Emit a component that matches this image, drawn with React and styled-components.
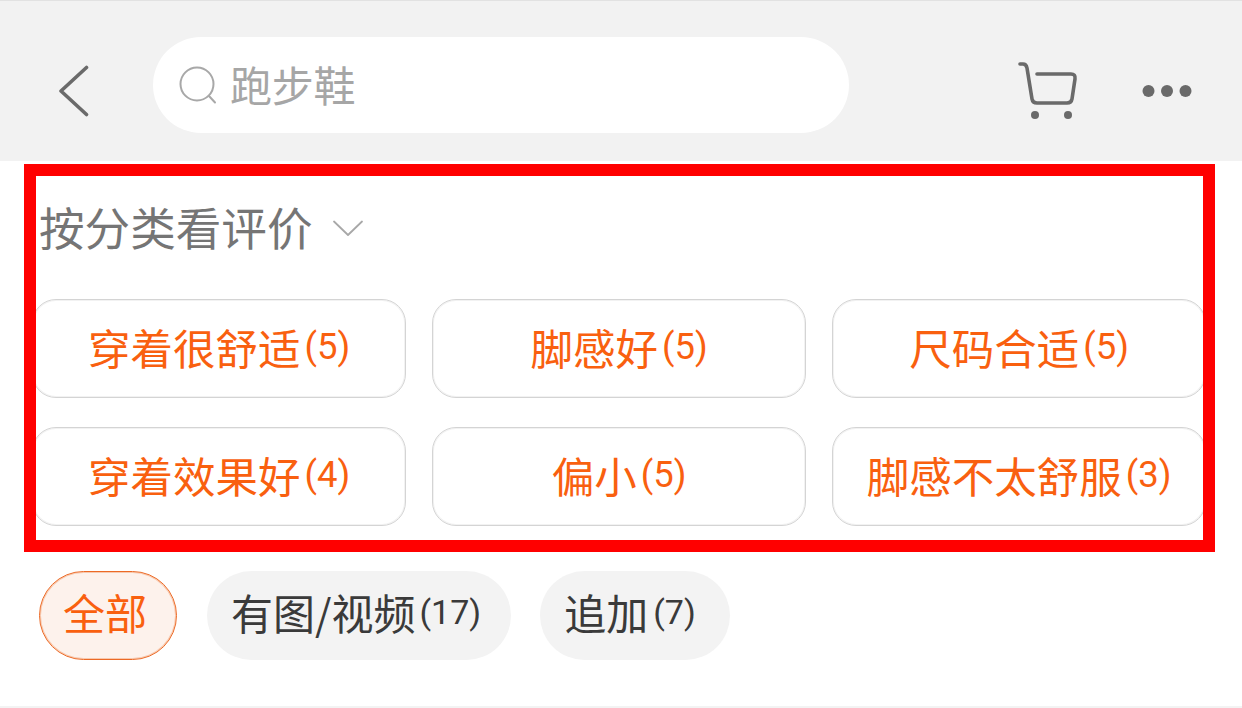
import React from "react";
import styled, { createGlobalStyle } from "styled-components";

const Global = createGlobalStyle`
  html, body { margin: 0; padding: 0; background: #fff; }
  body { font-family: "Liberation Sans", "Noto Sans CJK SC", sans-serif; }
  #root { width: 1242px; height: 708px; overflow: hidden; }
`;
const Page = styled.div`
  position: relative;
  width: 1242px;
  height: 708px;
  display: flex;
  flex-direction: column;
  overflow: hidden;
  background: #fff;
  border-bottom: 2px solid #f3f3f3;
  box-sizing: border-box;
`;
const Header = styled.header`
  height: 161px;
  flex: none;
  box-sizing: border-box;
  border-top: 1px solid #e2e2e2;
  background: #f2f2f2;
  display: flex;
  align-items: center;
  padding: 8px 50px 0 58px;
`;
const BackButton = styled.div`
  width: 95px;
  flex: none;
  display: flex;
  align-items: center;
  height: 60px;
  padding-top: 12px;
  box-sizing: border-box;
`;
const SearchBox = styled.div`
  width: 696px;
  height: 96px;
  flex: none;
  border-radius: 48px;
  background: #fff;
  display: flex;
  align-items: center;
  padding-left: 26px;
  box-sizing: border-box;
  gap: 13px;
`;
const SearchText = styled.span`
  font: 400 42px/1 "Noto Sans CJK SC", sans-serif;
  color: #a6a6a6;
  letter-spacing: -0.2px;
  margin-bottom: 3px;
`;
const HeaderActions = styled.div`
  margin-left: auto;
  display: flex;
  align-items: center;
  gap: 64px;
  padding-top: 12px;
`;
const Content = styled.main`
  flex: 1;
  display: flex;
  flex-direction: column;
  padding: 0 0 0 32px;
`;
const TitleRow = styled.div`
  height: 132px;
  display: flex;
  align-items: center;
  padding: 0 0 0 7px;
  gap: 20px;
  margin-bottom: 6px;
`;
const Title = styled.h2`
  margin: 0;
  font: 400 45.6px/1 "Noto Sans CJK SC", sans-serif;
  color: #757575;
`;
const ChevronWrap = styled.span`
  display: flex;
  padding-top: 2px;
`;
const TagGrid = styled.div`
  display: grid;
  grid-template-columns: repeat(3, 374px);
  grid-auto-rows: 99px;
  column-gap: 26px;
  row-gap: 29px;
`;
const Tag = styled.div`
  box-sizing: border-box;
  border: 1px solid #d4d4d4;
  box-shadow: inset 0 0 0 1px #f2f2f2;
  border-radius: 24px;
  display: flex;
  align-items: center;
  justify-content: center;
  color: #f9600f;
  background: #fff;
  font: 400 42.5px/1 "Noto Sans CJK SC", sans-serif;
  white-space: nowrap;
  padding-bottom: 3px;
`;
const Count = styled.span`
  font-family: Roboto, "Liberation Sans", sans-serif;
  font-size: ${(p) => p.$size || 36.5}px;
  margin-left: ${(p) => p.$gap || 4}px;
`;
const FilterRow = styled.div`
  display: flex;
  gap: 29px;
  margin: 45px 0 0 7px;
`;
const Filter = styled.div`
  box-sizing: border-box;
  height: 89px;
  padding: 0 ${(p) => p.$right || 30}px 8px ${(p) => (p.$active ? 23 : 24)}px;
  margin-right: ${(p) => (p.$active ? 1 : 0)}px;
  border-radius: 45px;
  display: flex;
  align-items: center;
  white-space: nowrap;
  font: 400 42px/1 "Noto Sans CJK SC", sans-serif;
  color: ${(p) => (p.$active ? "#f9600f" : "#3a3a3a")};
  background: ${(p) => (p.$active ? "#fdf2ec" : "#f3f3f3")};
  border: ${(p) => (p.$active ? "1px solid #ec6a26" : "none")};
  box-shadow: ${(p) => (p.$active ? "inset 0 0 0 1px #f8c9ae" : "none")};
`;
const HighlightFrame = styled.div`
  position: absolute;
  left: 24px;
  top: 164px;
  width: 1191px;
  height: 388px;
  box-sizing: border-box;
  border: 12px solid #ff0000;
  pointer-events: none;
`;

const tags = [
  ["穿着很舒适", "(5)"],
  ["脚感好", "(5)"],
  ["尺码合适", "(5)"],
  ["穿着效果好", "(4)"],
  ["偏小", "(5)"],
  ["脚感不太舒服", "(3)"],
];

export default function App() {
  return (
    <Page>
      <Global />
      <Header>
        <BackButton>
          <svg width="32" height="52" viewBox="0 0 32 52" fill="none">
            <path d="M28.500 2.500 3 26l25.500 23.500" stroke="#6a6a6a" strokeWidth="3.600" strokeLinecap="round" strokeLinejoin="round" />
          </svg>
        </BackButton>
        <SearchBox>
          <svg width="38" height="38" viewBox="0 0 38 38" fill="none">
            <circle cx="18" cy="18" r="16.500" stroke="#a8a8a8" strokeWidth="2" />
            <path d="m30 30 6 6.500" stroke="#a8a8a8" strokeWidth="2" strokeLinecap="round" />
          </svg>
          <SearchText>跑步鞋</SearchText>
        </SearchBox>
        <HeaderActions>
          <svg width="60" height="58" viewBox="0 0 60 58" fill="none">
            <path d="M2 2h3c2 0 3.500 1.500 4 4l5 31c.5 3 2 4 5 4h30c3 0 4.500-1 5-4l3-20c.5-3.500-1-5-4-5H19" stroke="#6a6a6a" strokeWidth="3.600" strokeLinecap="round" strokeLinejoin="round" />
            <circle cx="17" cy="53" r="4" fill="#6a6a6a" />
            <circle cx="50" cy="53" r="4" fill="#6a6a6a" />
          </svg>
          <svg width="50" height="14" viewBox="0 0 50 14" fill="#6a6a6a">
            <circle cx="6.500" cy="7" r="6" />
            <circle cx="25" cy="7" r="6" />
            <circle cx="43.500" cy="7" r="6" />
          </svg>
        </HeaderActions>
      </Header>
      <Content>
        <TitleRow>
          <Title>按分类看评价</Title>
          <ChevronWrap>
            <svg width="30" height="16" viewBox="0 0 30 16" fill="none">
              <path d="M1 1.500 15 15 29 1.500" stroke="#a8a8a8" strokeWidth="1.800" strokeLinecap="round" strokeLinejoin="round" />
            </svg>
          </ChevronWrap>
        </TitleRow>
        <TagGrid>
          {tags.map(([label, count]) => (
            <Tag key={label}>
              {label}
              <Count>{count}</Count>
            </Tag>
          ))}
        </TagGrid>
        <FilterRow>
          <Filter $active $right={29}>全部</Filter>
          <Filter>
            有图/视频<Count $size={34}>(17)</Count>
          </Filter>
          <Filter $right={34}>
            追加<Count $size={34} $gap={5}>(7)</Count>
          </Filter>
        </FilterRow>
      </Content>
      <HighlightFrame />
    </Page>
  );
}
